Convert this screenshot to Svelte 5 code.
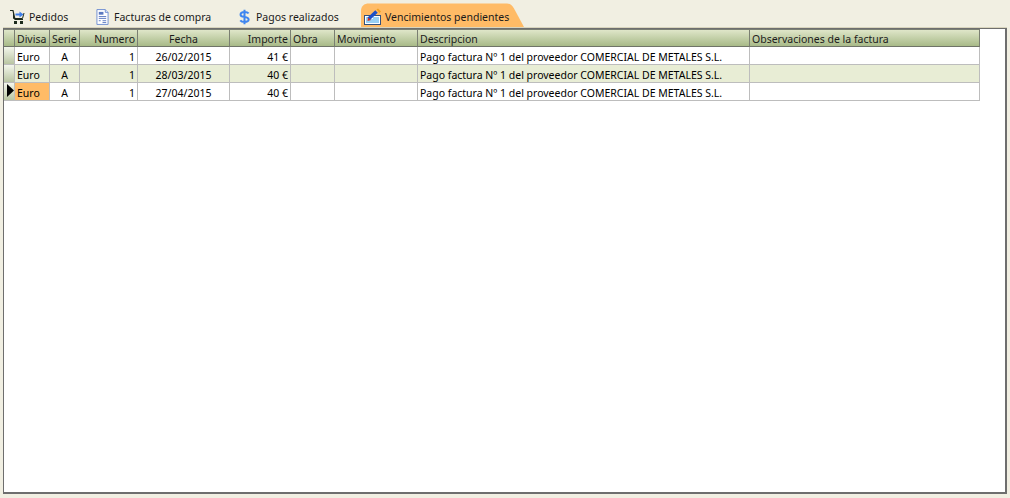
<script>
  const columns = [
    { label: 'Divisa', width: 35, align: 'left', head: 'left' },
    { label: 'Serie', width: 30, align: 'center', head: 'left' },
    { label: 'Numero', width: 58, align: 'right', head: 'right' },
    { label: 'Fecha', width: 92, align: 'center', head: 'center' },
    { label: 'Importe', width: 61, align: 'right', head: 'right' },
    { label: 'Obra', width: 44, align: 'left', head: 'left' },
    { label: 'Movimiento', width: 83, align: 'left', head: 'left' },
    { label: 'Descripcion', width: 332, align: 'left', head: 'left' },
    { label: 'Observaciones de la factura', width: 230, align: 'left', head: 'left' }
  ];

  const desc = 'Pago factura Nº 1 del proveedor COMERCIAL DE METALES S.L.';
  const rows = [
    ['Euro', 'A', '1', '26/02/2015', '41 €', '', '', desc, ''],
    ['Euro', 'A', '1', '28/03/2015', '40 €', '', '', desc, ''],
    ['Euro', 'A', '1', '27/04/2015', '40 €', '', '', desc, '']
  ];
  const current = 2;
</script>

<div class="page">
  <div class="tabs">
    <div class="tab tab-pedidos">
      <svg width="18" height="18" viewBox="0 0 18 18">
        <path d="M1 2.500h3l2 9h8" fill="none" stroke="#1c2a1c" stroke-width="1.200" />
        <path d="M4.500 5v5.500h9L15 5" fill="none" stroke="#1c2a1c" />
        <path d="M6.500 5.500h4V3.500l4 3-4 3V7.500h-4z" fill="#3f7fe8" />
        <rect x="5" y="13" width="3" height="3" fill="#1c2a1c" />
        <rect x="11" y="13" width="3" height="3" fill="#1c2a1c" />
      </svg>
      <span>Pedidos</span>
    </div>
    <div class="tab tab-facturas">
      <svg width="13" height="16" viewBox="0 0 14 17">
        <path d="M1 .5h9l3 3v13H1z" fill="#fff" stroke="#6c8bd0" />
        <path d="M10 .5v3h3" fill="#dfe8fa" stroke="#6c8bd0" />
        <rect x="3" y="3" width="5" height="3" fill="#5a78c0" />
        <path d="M3 8h8M3 10h8M3 12.500h2M7 12.500h4M7 14.500h4" stroke="#5a78c0" fill="none" />
      </svg>
      <span>Facturas de compra</span>
    </div>
    <div class="tab tab-pagos">
      <svg width="11" height="16" viewBox="0 0 12 17">
        <path d="M10.500 4.500C9.500 3.300 8 3 6 3 3.500 3 1.700 4.200 1.700 6S3.500 8.200 6 8.500s4.500 1 4.500 2.800S8.500 14 6 14c-2 0-3.600-.5-4.600-1.800M6 .5v16" fill="none" stroke="#3f86f0" stroke-width="2.200" />
      </svg>
      <span>Pagos realizados</span>
    </div>
    <div class="tab tab-active">
      <svg class="shape" width="163" height="24" viewBox="0 0 163 24">
        <path d="M0 24V8C0 3 3 .5 8 .5h138c3 0 5 1.500 7 5l10 18.500z" fill="#ffbb66" />
      </svg>
      <svg class="icon" width="18" height="17" viewBox="0 0 18 17">
        <rect x=".5" y="7.500" width="16" height="9" fill="#fff" stroke="#34507c" />
        <path d="M2 10h3M9 10h6M2 12h13M2 14h13" stroke="#30a0e8" fill="none" />
        <path d="M4.500 11L12.500 3.500" stroke="#1c50c8" stroke-width="3.500" fill="none" />
        <path d="M12.500 1.500l1.500-1 3 3-1.500 1.500z" fill="#f0a020" />
        <path d="M3.500 13l.5-3.500 3 2.500z" fill="#d03020" />
      </svg>
      <span class="tab-label">Vencimientos pendientes</span>
    </div>
  </div>

  <div class="panel">
    <table>
      <colgroup>
        <col style="width: 11px" />
        {#each columns as c}
          <col style="width: {c.width}px" />
        {/each}
      </colgroup>
      <thead>
        <tr>
          <th class="ind"></th>
          {#each columns as c}
            <th class={c.head}>{c.label}</th>
          {/each}
        </tr>
      </thead>
      <tbody>
        {#each rows as row, r}
          <tr class:alt={r % 2 === 1}>
            <td class="ind">
              {#if r === current}
                <svg class="arrow" width="7" height="13" viewBox="0 0 7 13"><path d="M0 0l7 6.500-7 6.500z" fill="#000" /></svg>
              {/if}
            </td>
            {#each row as value, i}
              <td class={columns[i].align} class:sel={r === current && i === 0}>{value}</td>
            {/each}
          </tr>
        {/each}
      </tbody>
    </table>
  </div>
</div>

<style>
  :global(body) {
    background: #f1efe2;
  }
  .page {
    width: 1010px;
    height: 498px;
    box-sizing: border-box;
    padding: 0 3px 4px 3px;
    display: flex;
    flex-direction: column;
    font-family: Tahoma, 'Noto Sans', 'Open Sans', sans-serif;
    font-size: 10.5px;
    color: #000;
    overflow: hidden;
  }

  .tabs {
    height: 27px;
    display: flex;
    align-items: flex-end;
    flex-shrink: 0;
    border-bottom: 1px solid #d9d5bd;
  }
  .tab {
    display: flex;
    align-items: center;
    height: 20px;
    color: #1a1a1a;
  }
  .tab-pedidos {
    margin-left: 6px;
    width: 83px;
    gap: 2px;
  }
  .tab-facturas {
    margin-left: 4px;
    width: 141px;
    gap: 5px;
  }
  .tab-pagos {
    margin-left: 2px;
    width: 120px;
    gap: 6px;
  }
  .tab-active {
    position: relative;
    width: 163px;
    height: 24px;
    margin-left: 2px;
  }
  .shape {
    position: absolute;
    left: 0;
    top: 0;
  }
  .icon {
    position: relative;
    margin-left: 3px;
    margin-top: 3px;
  }
  .tab-label {
    position: relative;
    margin-left: 3px;
    margin-top: 3px;
  }

  .panel {
    flex: 1;
    background: #fff;
    border: 1px solid #6e6e6e;
    border-width: 1px 2px 2px 1px;
    min-height: 0;
  }

  table {
    table-layout: fixed;
    border-collapse: separate;
    border-spacing: 0;
    width: 976px;
  }
  th {
    height: 18px;
    padding: 1px 2px 0;
    font-weight: normal;
    background: linear-gradient(to bottom, #dfe6c9, #a8ba88);
    border-right: 1px solid #7a7f72;
    border-bottom: 1px solid #6f7468;
    border-top: 1px solid #7a7f72;
    box-sizing: border-box;
    white-space: nowrap;
    overflow: hidden;
    color: #1c1c1c;
  }
  td {
    height: 18px;
    padding: 2px 2px 0;
    border-right: 1px solid #bdbdbd;
    border-bottom: 1px solid #bdbdbd;
    box-sizing: border-box;
    white-space: nowrap;
    overflow: hidden;
  }
  tr.alt td {
    background: #e8edd5;
  }
  td.ind,
  tr.alt td.ind {
    position: relative;
    background: linear-gradient(to bottom, #f4f6ec, #b9c5a2);
    padding: 0;
  }
  th.ind {
    padding: 0;
  }
  .arrow {
    position: absolute;
    left: 3px;
    top: 1px;
  }
  .left {
    text-align: left;
  }
  .center {
    text-align: center;
  }
  .right {
    text-align: right;
  }
  td.sel {
    background: #ffbb66;
  }
</style>
